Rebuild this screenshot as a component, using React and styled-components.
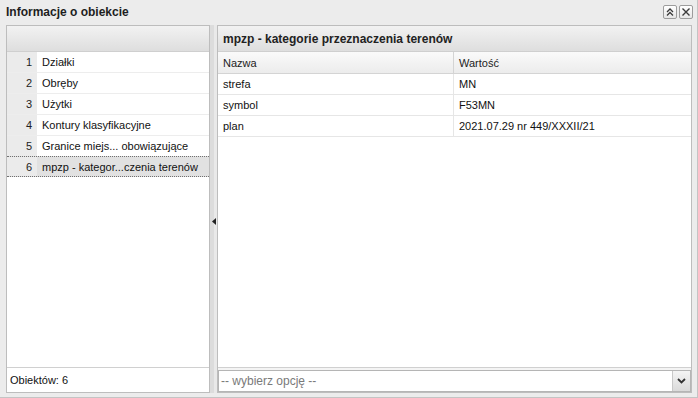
import styled, { createGlobalStyle } from 'styled-components';

const GlobalStyle = createGlobalStyle`
  html, body {
    margin: 0;
    padding: 0;
  }
  body {
    font-family: Tahoma, 'Liberation Sans', Arial, sans-serif;
    font-size: 11px;
    color: #000;
  }
`;

const LAYERS = [
  'Działki',
  'Obręby',
  'Użytki',
  'Kontury klasyfikacyjne',
  'Granice miejs... obowiązujące',
  'mpzp - kategor...czenia terenów',
];

const ATTRIBUTES = [
  { name: 'strefa', value: 'MN' },
  { name: 'symbol', value: 'F53MN' },
  { name: 'plan', value: '2021.07.29 nr 449/XXXII/21' },
];

export default function App() {
  const selected = 5;

  return (
    <Window>
      <GlobalStyle />
      <TitleBar>
        <Title>Informacje o obiekcie</Title>
        <Tools>
          <ToolButton title="Zwiń">
            <svg width="10" height="10" viewBox="0 0 10 10">
              <path d="M2 5 L5 2 L8 5 M2 8.5 L5 5.5 L8 8.5" fill="none" stroke="#3a3a3a" strokeWidth="1.3" />
            </svg>
          </ToolButton>
          <ToolButton title="Zamknij">
            <svg width="10" height="10" viewBox="0 0 10 10">
              <path d="M1.5 1.5 L8.5 8.5 M8.5 1.5 L1.5 8.5" stroke="#3a3a3a" strokeWidth="1.4" />
            </svg>
          </ToolButton>
        </Tools>
      </TitleBar>

      <Body>
        <LeftPanel>
          <PanelHeader />
          <List>
            {LAYERS.map((label, i) => (
              <ListRow key={label} selected={i === selected}>
                <RowNumber>{i + 1}</RowNumber>
                <RowLabel>{label}</RowLabel>
              </ListRow>
            ))}
          </List>
          <Footer>Obiektów: 6</Footer>
        </LeftPanel>

        <Splitter>
          <svg width="4" height="7" viewBox="0 0 4 7">
            <path d="M4 0 L0 3.5 L4 7 Z" fill="#222" />
          </svg>
        </Splitter>

        <RightPanel>
          <PanelHeader>mpzp - kategorie przeznaczenia terenów</PanelHeader>
          <Grid>
            <HeadCell>Nazwa</HeadCell>
            <HeadCell last>Wartość</HeadCell>
            {ATTRIBUTES.map((a) => [
              <Cell key={a.name + '-n'}>{a.name}</Cell>,
              <Cell key={a.name + '-v'} last>{a.value}</Cell>,
            ])}
          </Grid>
          <Filler />
          <ComboBar>
            <Combo>
              <ComboText>-- wybierz opcję --</ComboText>
              <ComboButton>
                <svg width="9" height="6" viewBox="0 0 9 6">
                  <path d="M1 1 L4.5 4.5 L8 1" fill="none" stroke="#333" strokeWidth="1.8" />
                </svg>
              </ComboButton>
            </Combo>
          </ComboBar>
        </RightPanel>
      </Body>
    </Window>
  );
}

const Window = styled.div`
  width: 698px;
  height: 398px;
  box-sizing: border-box;
  background: #ececec;
  border-right: 1px solid #c4c4c4;
  border-bottom: 1px solid #c4c4c4;
  display: flex;
  flex-direction: column;
  overflow: hidden;
`;

const TitleBar = styled.div`
  height: 24px;
  padding: 0 4px 0 6px;
  display: flex;
  align-items: center;
  justify-content: space-between;
`;

const Title = styled.div`
  font-weight: 700;
  font-size: 12px;
  color: #1e1e1e;
`;

const Tools = styled.div`
  display: flex;
  gap: 2px;
`;

const ToolButton = styled.div`
  width: 14px;
  height: 14px;
  box-sizing: border-box;
  border: 1px solid #9c9c9c;
  border-radius: 2px;
  background: linear-gradient(#ffffff, #e6e6e6);
  display: flex;
  align-items: center;
  justify-content: center;
`;

const Body = styled.div`
  flex: 1;
  min-height: 0;
  display: flex;
  padding: 1px 5px 4px 6px;
`;

const Panel = styled.div`
  box-sizing: border-box;
  border: 1px solid #bdbdbd;
  background: #fff;
  display: flex;
  flex-direction: column;
`;

const LeftPanel = styled(Panel)`
  width: 204px;
`;

const RightPanel = styled(Panel)`
  flex: 1;
`;

const PanelHeader = styled.div`
  height: 26px;
  flex: none;
  box-sizing: border-box;
  padding: 0 5px;
  display: flex;
  align-items: center;
  background: linear-gradient(#f2f2f2, #dedede);
  border-bottom: 1px solid #cfcfcf;
  font-weight: 700;
  font-size: 12px;
  color: #222;
`;

const List = styled.div`
  flex: 1;
  display: flex;
  flex-direction: column;
`;

const ListRow = styled.div`
  height: 21px;
  box-sizing: border-box;
  display: flex;
  background: ${(p) => (p.selected ? '#e1e1e1' : '#fff')};
  border-bottom: ${(p) => (p.selected ? '1px dotted #707070' : '1px solid #ededed')};
  border-top: ${(p) => (p.selected ? '1px dotted #707070' : '0')};
  margin-top: ${(p) => (p.selected ? '-1px' : '0')};
`;

const RowNumber = styled.div`
  width: 30px;
  padding-right: 5px;
  box-sizing: border-box;
  background: #ebebeb;
  display: flex;
  align-items: center;
  justify-content: flex-end;
  color: #222;
`;

const RowLabel = styled.div`
  padding-left: 5px;
  display: flex;
  align-items: center;
  white-space: nowrap;
  color: #111;
`;

const Footer = styled.div`
  height: 25px;
  box-sizing: border-box;
  border-top: 1px solid #d0d0d0;
  padding-left: 3px;
  display: flex;
  align-items: center;
  color: #111;
`;

const Splitter = styled.div`
  width: 7px;
  flex: none;
  background: linear-gradient(90deg, #dcdcdc 0 4px, #e9e9e9 4px);
  display: flex;
  align-items: center;
  justify-content: center;
  padding-top: 24px;
  box-sizing: border-box;
`;

const Grid = styled.div`
  display: grid;
  grid-template-columns: 236px 1fr;
`;

const HeadCell = styled.div`
  height: 22px;
  box-sizing: border-box;
  padding-left: 5px;
  display: flex;
  align-items: center;
  background: linear-gradient(#fafafa, #ececec);
  border-bottom: 1px solid #d4d4d4;
  border-right: ${(p) => (p.last ? '0' : '1px solid #d4d4d4')};
  color: #222;
`;

const Cell = styled.div`
  height: 21px;
  box-sizing: border-box;
  padding-left: 5px;
  display: flex;
  align-items: center;
  border-bottom: 1px solid #e6e6e6;
  border-right: ${(p) => (p.last ? '0' : '1px solid #e6e6e6')};
  color: #111;
`;

const Filler = styled.div`
  flex: 1;
`;

const ComboBar = styled.div`
  border-top: 1px solid #d0d0d0;
  background: #f4f4f4;
  padding: 2px 0 0 0;
`;

const Combo = styled.div`
  height: 22px;
  box-sizing: border-box;
  border: 1px solid #b5b5b5;
  background: #fff;
  display: flex;
`;

const ComboText = styled.div`
  flex: 1;
  padding-left: 2px;
  display: flex;
  align-items: center;
  font-size: 12px;
  color: #7a7a7a;
`;

const ComboButton = styled.div`
  width: 17px;
  border-left: 1px solid #c8c8c8;
  background: linear-gradient(#f4f4f4, #dadada);
  display: flex;
  align-items: center;
  justify-content: center;
`;
